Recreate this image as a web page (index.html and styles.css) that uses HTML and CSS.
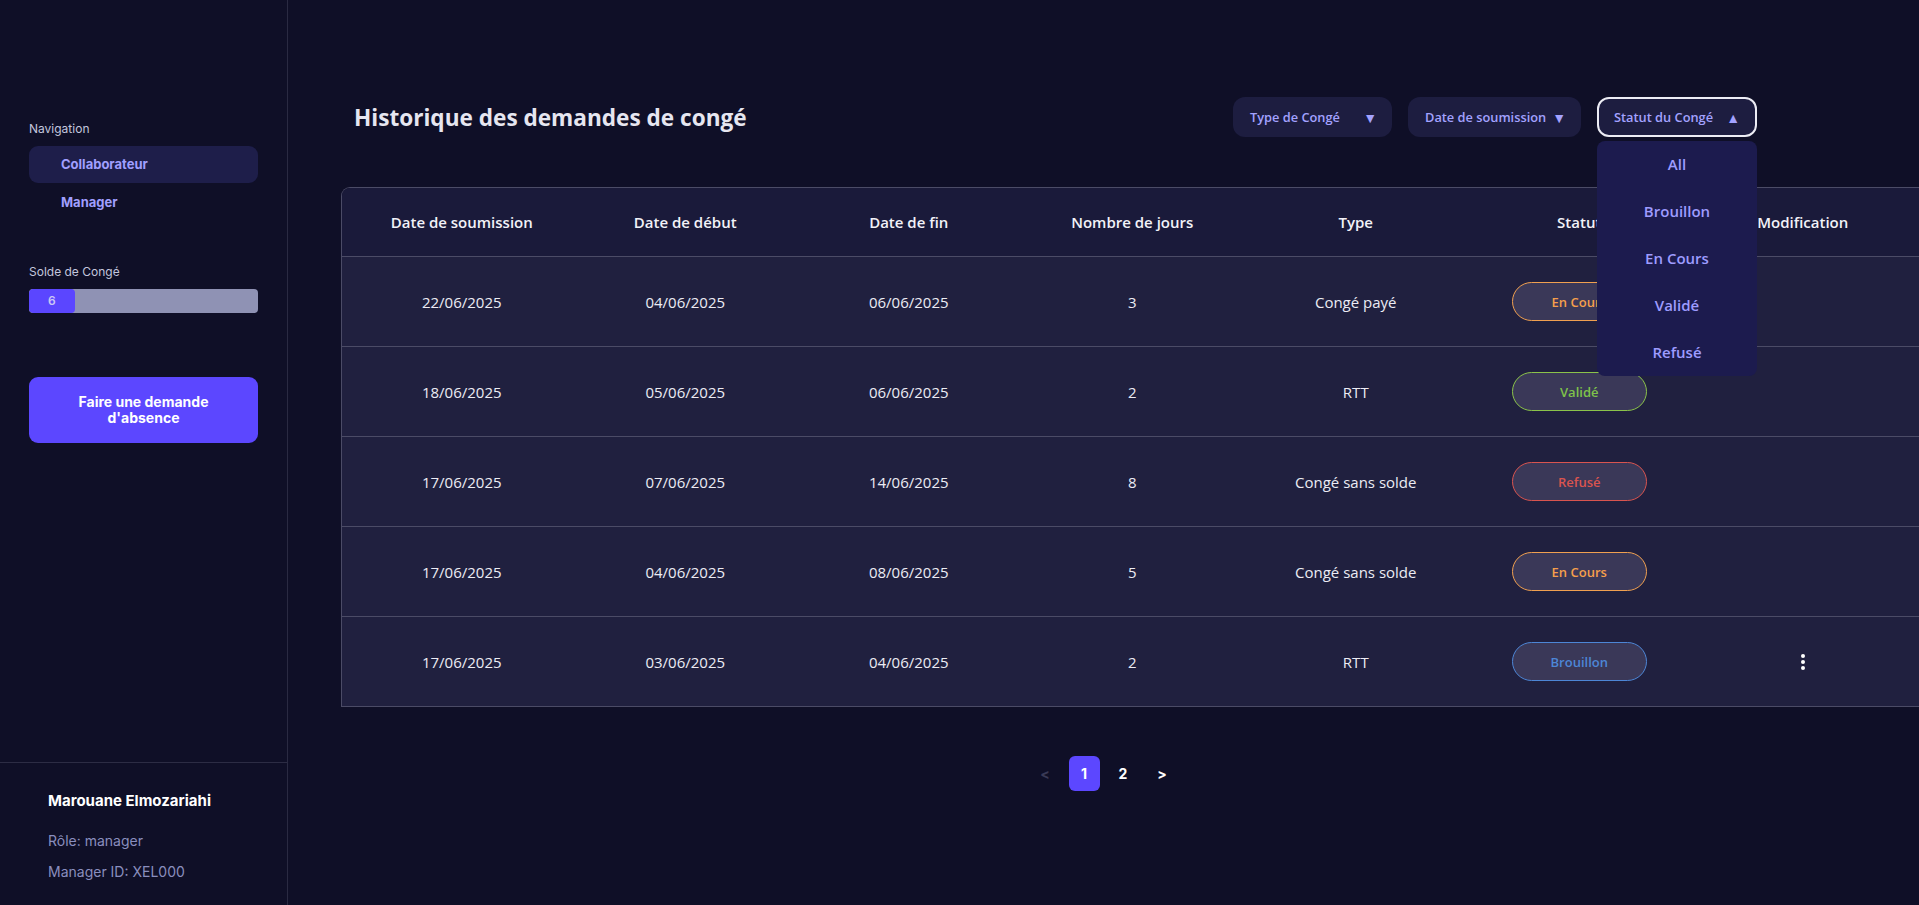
FILE: index.html
```html
<!DOCTYPE html>
<html lang="fr">
<head>
<meta charset="utf-8">
<title>Historique des demandes de congé</title>
<link rel="stylesheet" href="styles.css">
</head>
<body>
<div class="app">
  <aside class="sidebar">
    <div class="side-top">
      <div class="nav-label">Navigation</div>
      <a class="nav-item active">Collaborateur</a>
      <a class="nav-item">Manager</a>
      <div class="solde-label">Solde de Congé</div>
      <div class="solde-bar"><div class="solde-fill" style="width:20%">6</div></div>
      <button class="cta">Faire une demande<br>d'absence</button>
    </div>
    <div class="side-bottom">
      <div class="user-name">Marouane Elmozariahi</div>
      <div class="user-meta">Rôle: manager</div>
      <div class="user-meta">Manager ID: XEL000</div>
    </div>
  </aside>

  <main class="main">
    <div class="header">
      <h1 class="title">Historique des demandes de congé</h1>
      <div class="filters">
        <div class="filter f-type"><span>Type de Congé</span><span class="arrow">▼</span></div>
        <div class="filter f-date"><span>Date de soumission</span><span class="arrow">▼</span></div>
        <div class="filter-wrap">
          <div class="filter f-status open"><span>Statut du Congé</span><span class="arrow">▲</span></div>
          <div class="dropdown">
            <div class="dd-item">All</div>
            <div class="dd-item">Brouillon</div>
            <div class="dd-item">En Cours</div>
            <div class="dd-item">Validé</div>
            <div class="dd-item">Refusé</div>
          </div>
        </div>
      </div>
    </div>

    <div class="table">
      <div class="row head">
        <div class="cell">Date de soumission</div>
        <div class="cell">Date de début</div>
        <div class="cell">Date de fin</div>
        <div class="cell">Nombre de jours</div>
        <div class="cell">Type</div>
        <div class="cell">Statut</div>
        <div class="cell">Modification</div>
      </div>
      <div class="row">
        <div class="cell">22/06/2025</div>
        <div class="cell">04/06/2025</div>
        <div class="cell">06/06/2025</div>
        <div class="cell">3</div>
        <div class="cell">Congé payé</div>
        <div class="cell"><span class="badge encours">En Cours</span></div>
        <div class="cell"></div>
      </div>
      <div class="row">
        <div class="cell">18/06/2025</div>
        <div class="cell">05/06/2025</div>
        <div class="cell">06/06/2025</div>
        <div class="cell">2</div>
        <div class="cell">RTT</div>
        <div class="cell"><span class="badge valide">Validé</span></div>
        <div class="cell"></div>
      </div>
      <div class="row">
        <div class="cell">17/06/2025</div>
        <div class="cell">07/06/2025</div>
        <div class="cell">14/06/2025</div>
        <div class="cell">8</div>
        <div class="cell">Congé sans solde</div>
        <div class="cell"><span class="badge refuse">Refusé</span></div>
        <div class="cell"></div>
      </div>
      <div class="row">
        <div class="cell">17/06/2025</div>
        <div class="cell">04/06/2025</div>
        <div class="cell">08/06/2025</div>
        <div class="cell">5</div>
        <div class="cell">Congé sans solde</div>
        <div class="cell"><span class="badge encours">En Cours</span></div>
        <div class="cell"></div>
      </div>
      <div class="row">
        <div class="cell">17/06/2025</div>
        <div class="cell">03/06/2025</div>
        <div class="cell">04/06/2025</div>
        <div class="cell">2</div>
        <div class="cell">RTT</div>
        <div class="cell"><span class="badge brouillon">Brouillon</span></div>
        <div class="cell">
          <svg class="kebab" width="6" height="18" viewBox="0 0 6 18"><circle cx="3" cy="3" r="2" fill="#fff"/><circle cx="3" cy="9" r="2" fill="#fff"/><circle cx="3" cy="15" r="2" fill="#fff"/></svg>
        </div>
      </div>
    </div>

    <div class="pagination">
      <span class="page disabled">&lt;</span>
      <span class="page current">1</span>
      <span class="page">2</span>
      <span class="page">&gt;</span>
    </div>
  </main>
</div>
</body>
</html>
```

FILE: styles.css
```css
* { box-sizing: border-box; }
html, body { margin: 0; padding: 0; }
body {
  background: #0f0f27;
  color: #e8e8f0;
  font-family: "Open Sans", "Noto Sans", sans-serif;
  width: 1919px;
  height: 905px;
  overflow: hidden;
}
.app {
  display: flex;
  height: 905px;
}

/* Sidebar */
.sidebar {
  width: 288px;
  flex: 0 0 288px;
  border-right: 1px solid #2a2a42;
  display: flex;
  flex-direction: column;
  font-family: Inter, "Liberation Sans", sans-serif;
}
.side-top {
  padding: 121px 29px 0 29px;
  display: flex;
  flex-direction: column;
}
.nav-label {
  font-size: 12px;
  line-height: 15px;
  color: #c3c6de;
  margin-bottom: 10px;
}
.nav-item {
  display: block;
  height: 37px;
  line-height: 37px;
  padding-left: 32px;
  border-radius: 9px;
  font-size: 13px;
  font-weight: 700;
  color: #a09fff;
  margin-bottom: 1px;
}
.nav-item.active { background: #1e1e4a; }
.solde-label {
  margin-top: 42px;
  font-size: 12px;
  line-height: 15px;
  color: #c3c6de;
}
.solde-bar {
  margin-top: 10px;
  height: 24px;
  border-radius: 4px;
  background: #8f92b4;
  overflow: hidden;
}
.solde-fill {
  height: 100%;
  background: #5b46ff;
  border-radius: 4px;
  color: #c9c6f5;
  font-size: 12px;
  font-weight: 600;
  line-height: 24px;
  text-align: center;
}
.cta {
  margin-top: 64px;
  height: 66px;
  border: none;
  border-radius: 9px;
  background: #5c47ff;
  color: #fff;
  font-family: Inter, "Liberation Sans", sans-serif;
  font-size: 14px;
  font-weight: 700;
  line-height: 16px;
}
.side-bottom {
  margin-top: auto;
  height: 143px;
  border-top: 1px solid #2c2c44;
  padding: 28px 0 0 48px;
}
.user-name {
  font-size: 15px;
  font-weight: 700;
  color: #fff;
  line-height: 20px;
  margin-bottom: 20px;
}
.user-meta {
  font-size: 14px;
  color: #8a8ebe;
  line-height: 20px;
  margin-bottom: 11px;
}

/* Main */
.main {
  flex: 1;
  min-width: 0;
  overflow: hidden;
  display: flex;
  flex-direction: column;
}
.header {
  margin: 97px 162px 0 53px;
  height: 40px;
  display: flex;
  align-items: center;
  justify-content: space-between;
}
.title {
  margin: 0 0 0 13px;
  font-size: 22.6px;
  font-weight: 700;
  color: #e6e6f0;
}
.filters {
  display: flex;
  gap: 16px;
}
.filter {
  height: 40px;
  padding: 0 15px 0 17px;
  border-radius: 12px;
  background: #1d1d40;
  display: flex;
  align-items: center;
  justify-content: space-between;
  font-size: 12.8px;
  font-weight: 600;
  color: #a3a2ff;
}
.f-type { width: 159px; }
.f-date { width: 173px; }
.f-status { width: 160px; }
.filter .arrow {
  font-size: 14px;
  color: #a3a2ff;
}
.filter-wrap { position: relative; }
.filter.open {
  border: 2px solid #ececf4;
  padding: 0 15px;
}
.dropdown {
  position: absolute;
  top: 44px;
  left: 0;
  width: 160px;
  background: #1c1b4e;
  border-radius: 8px;
  z-index: 5;
}
.dd-item {
  height: 47px;
  line-height: 47px;
  text-align: center;
  font-size: 15px;
  font-weight: 600;
  color: #9e9cff;
}

/* Table */
.table {
  margin: 50px 0 0 53px;
  width: 1640px;
  border: 1px solid #4b4b66;
  border-right: none;
  border-radius: 9px 0 0 0;
  overflow: hidden;
}
.row {
  display: grid;
  grid-template-columns: repeat(7, 223.5px);
  padding-left: 8px;
  height: 90px;
  background: #20203f;
  border-top: 1px solid #4b4b66;
  align-items: center;
}
.row.head {
  height: 68px;
  background: #1a1a3a;
  border-top: none;
}
.cell {
  text-align: center;
  font-size: 15px;
  color: #ececf4;
  display: flex;
  justify-content: center;
  align-items: center;
}
.head .cell { font-weight: 600; color: #f2f2f8; }
.badge {
  width: 135px;
  height: 39px;
  border-radius: 20px;
  background: #3a3858;
  border: 1px solid;
  display: flex;
  align-items: center;
  justify-content: center;
  font-size: 13px;
  font-weight: 600;
}
.badge.encours { color: #f59f4c; border-color: #f0a050; }
.badge.valide { color: #7fc24a; border-color: #8bc34a; }
.badge.refuse { color: #d9544f; border-color: #d9544f; }
.badge.brouillon { color: #4d86d6; border-color: #4d86d6; }
.kebab { display: block; }

/* Pagination */
.pagination {
  margin-top: 49px;
  display: flex;
  justify-content: center;
  gap: 8px;
  font-family: Inter, "Liberation Sans", sans-serif;
}
.page {
  width: 31px;
  height: 35px;
  border-radius: 6px;
  display: flex;
  align-items: center;
  justify-content: center;
  font-size: 14px;
  font-weight: 700;
  color: #fff;
}
.page.current { background: #5c47ff; }
.page.disabled { color: #3a3a56; }
```
